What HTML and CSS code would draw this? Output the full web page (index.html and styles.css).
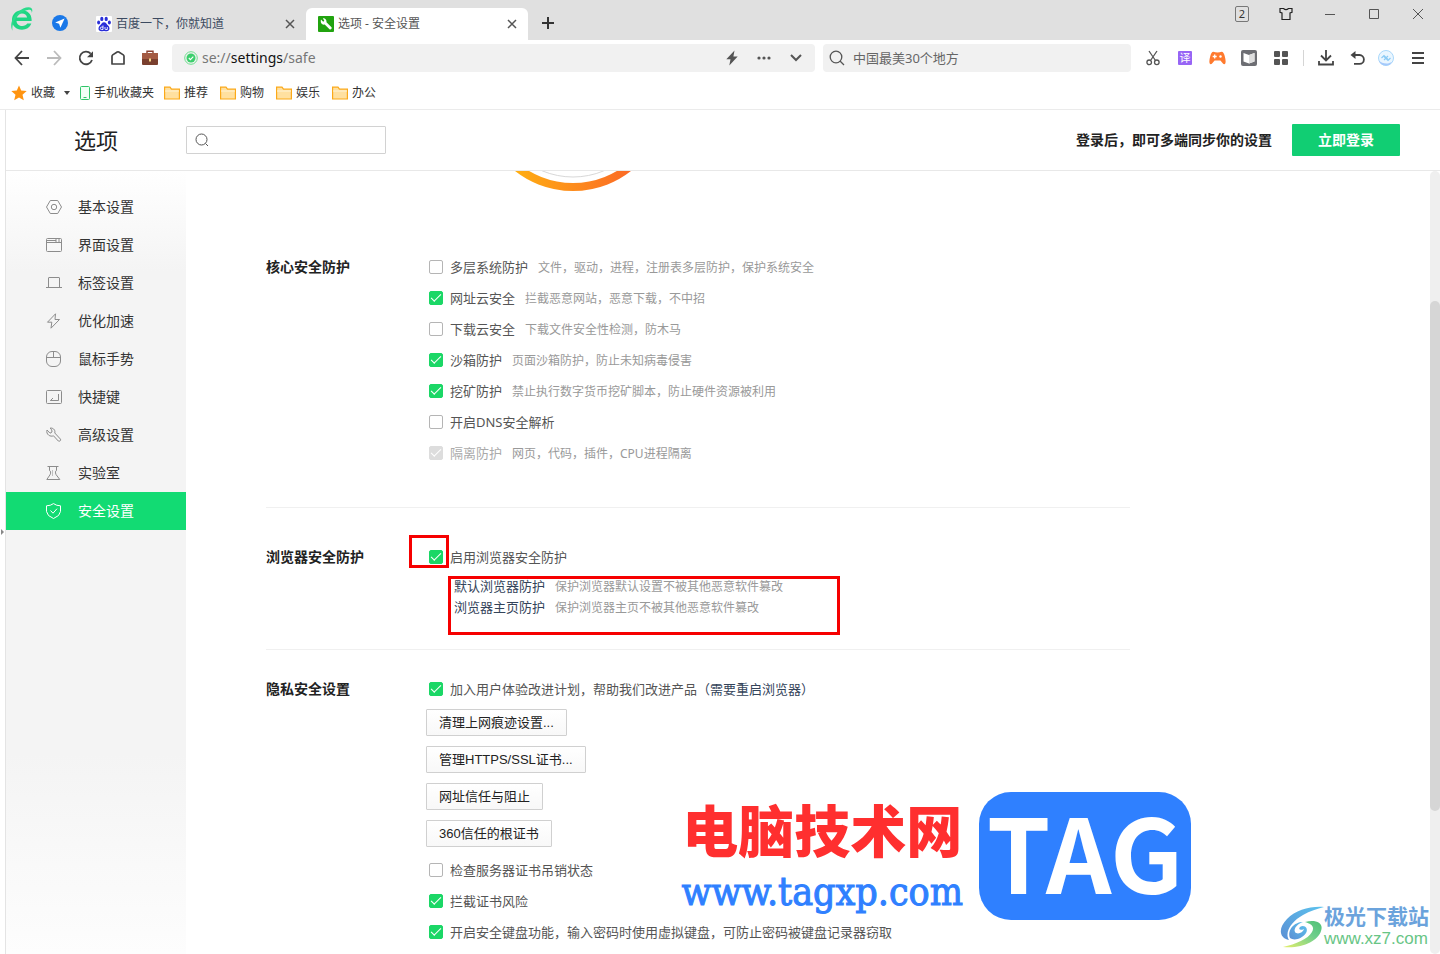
FILE: index.html
```html
<!DOCTYPE html>
<html lang="zh-CN">
<head>
<meta charset="utf-8">
<title>选项 - 安全设置</title>
<link rel="stylesheet" href="styles.css">
</head>
<body>
<div class="browser">
  <header class="titlebar">
    <div class="brand">
      <svg class="brand-logo" width="24" height="26" viewBox="0 0 24 26"><path d="M20.500 15H6.500c.3 3.200 2.700 5 5.800 5 2.300 0 4-.9 5-2.500h4c-1.600 4.200-5 6.200-9.300 6.200-5.800 0-10-4-10-9.800C2 8.200 6.200 4.200 12 4.200c5.600 0 9.600 4 9.600 9.300V15zM6.700 11.600h10.400c-.5-2.600-2.400-4-5.100-4-2.800 0-4.800 1.500-5.300 4z" fill="#1fd583"/><path d="M2.500 24.800C-.5 19.500 2 11.500 7.500 6.500 12.500 2 19 0 21.500 2.300c1.200 1.200.9 3.200.2 4.800.1-1.700-.2-2.700-1.300-3.100C17.500 3 12.500 5.300 8.700 9 4.300 13.400 1.600 19.500 2.500 24.800z" fill="#2bdb8b"/></svg>
      <svg width="16" height="16" viewBox="0 0 16 16"><circle cx="8" cy="8" r="8" fill="#1a78e8"/><path d="M12.600 3.500 3.200 7.600l3.900 1.200 1.300 3.900z" fill="#fff"/></svg>
    </div>
    <nav class="tabs">
      <div class="tab">
        <svg class="favicon" width="16" height="16" viewBox="0 0 16 16"><rect width="16" height="16" rx="1" fill="#fff"/><g fill="#2a2fd8"><ellipse cx="5.800" cy="2.900" rx="1.600" ry="2.200"/><ellipse cx="10.200" cy="2.900" rx="1.600" ry="2.200"/><ellipse cx="2.600" cy="6.500" rx="1.500" ry="2"/><ellipse cx="13.400" cy="6.500" rx="1.500" ry="2"/><path d="M8 6.200c2 0 2.800 2.200 4.300 3.600 2 1.900 1.500 5.400-1.400 5.400-1 0-1.800-.3-2.900-.3s-1.900.3-2.900.3c-2.900 0-3.400-3.500-1.400-5.400C5.200 8.400 6 6.200 8 6.200z"/></g><path d="M7 9.500v4H5.500a1.200 1.200 0 1 1 0-2.400H7M9 11v1.800q0 .7.700.7h1.600V11" fill="none" stroke="#fff" stroke-width=".9"/></svg>
        <a class="tab-title tab-title-idle" href="#">百度一下，你就知道</a>
        <button class="tab-close" aria-label="关闭标签"><svg width="10" height="10" viewBox="0 0 10 10"><path d="M1 1l8 8M9 1 1 9"/></svg></button>
      </div>
      <div class="tab tab-active">
        <svg class="favicon" width="16" height="16" viewBox="0 0 16 16"><rect width="16" height="16" rx="1" fill="#21a30f"/><path d="M3 3.600 5.200 5.700 6.300 4.800 4.800 2.300C7 1.900 8.900 3.700 8.500 6.200l5 5c.9 1-.9 3-2 2L6.700 8.500C4.200 9.200 2 7 3 3.600z" fill="#fff"/></svg>
        <a class="tab-title" href="#">选项 - 安全设置</a>
        <button class="tab-close" aria-label="关闭标签"><svg width="10" height="10" viewBox="0 0 10 10"><path d="M1 1l8 8M9 1 1 9"/></svg></button>
      </div>
      <button class="new-tab" aria-label="新建标签"><svg width="12" height="12" viewBox="0 0 12 12"><path d="M6 0v12M0 6h12" stroke="#333" stroke-width="2"/></svg></button>
    </nav>
    <div class="window-controls">
      <button><span class="count">2</span></button>
      <button aria-label="皮肤"><svg width="14" height="14" viewBox="0 0 14 14"><path d="M1 1.500h3.500Q7 3.600 9.500 1.500H13v3.800l-2 .7v6.500H3V6L1 5.300z" fill="none" stroke="#222" stroke-width="1.200"/></svg></button>
      <button aria-label="最小化"><svg width="10" height="10" viewBox="0 0 10 10"><path d="M0 5.500h10" stroke="#555"/></svg></button>
      <button aria-label="最大化"><svg width="10" height="10" viewBox="0 0 10 10"><path d="M.5.500h9v9h-9z" fill="none" stroke="#555"/></svg></button>
      <button aria-label="关闭"><svg width="10" height="10" viewBox="0 0 10 10"><path d="M0 0l10 10M10 0 0 10" stroke="#555"/></svg></button>
    </div>
  </header>

  <div class="toolbar">
    <div class="nav-buttons">
      <button aria-label="后退"><svg width="16" height="16" viewBox="0 0 16 16"><path d="M8 1 1.500 8 8 15M1.500 8H15" fill="none" stroke="#444" stroke-width="1.800"/></svg></button>
      <button aria-label="前进"><svg width="16" height="16" viewBox="0 0 16 16"><path d="M8 1l6.500 7L8 15M14.500 8H1" fill="none" stroke="#bbb" stroke-width="1.800"/></svg></button>
      <button aria-label="刷新"><svg width="16" height="16" viewBox="0 0 16 16"><path d="M14 10A6.300 6.300 0 1 1 12.700 3.700" fill="none" stroke="#444" stroke-width="1.800"/><path d="M15 1.200v6H9z" fill="#444"/></svg></button>
      <button aria-label="主页"><svg width="16" height="16" viewBox="0 0 16 16"><path d="M2 14V6.200Q2 5.400 2.700 4.900L7.200 2Q8 1.500 8.800 2l4.500 2.900q.7.500.7 1.300V14z" fill="none" stroke="#444" stroke-width="1.700" stroke-linejoin="round"/></svg></button>
      <button aria-label="工具箱"><svg width="16" height="16" viewBox="0 0 16 16"><path d="M5 3.500V1.200h6v2.300" fill="none" stroke="#8a4030" stroke-width="1.400"/><rect y="3" width="16" height="12" rx="1" fill="#7a3f2e"/><path d="M0 4q0-1 1-1h14q1 0 1 1v5H0z" fill="#a35a42"/><rect x="7" y="8.500" width="2" height="3" fill="#f8d98a"/></svg></button>
    </div>
    <div class="address">
      <svg class="safe-mark" width="14" height="14" viewBox="0 0 14 14"><circle cx="7" cy="7" r="6.300" fill="none" stroke="#6fdf8f" stroke-width="1"/><circle cx="7" cy="7" r="4.500" fill="#3ccf6d"/><path d="m4.800 7 1.600 1.600 2.900-2.900" fill="none" stroke="#fff" stroke-width="1.100"/></svg>
      <a class="url" href="#">se://<span class="url-host">settings</span>/safe</a>
      <button aria-label="极速模式"><svg width="12" height="16" viewBox="0 0 12 16"><path d="M8.500.500.300 9.200h4.200L3.300 15.500 11.700 6.500H7.400z" fill="#555"/></svg></button>
      <button aria-label="更多"><svg width="14" height="4" viewBox="0 0 14 4"><circle cx="2" cy="2" r="1.600" fill="#555"/><circle cx="7" cy="2" r="1.600" fill="#555"/><circle cx="12" cy="2" r="1.600" fill="#555"/></svg></button>
      <button aria-label="展开"><svg width="12" height="8" viewBox="0 0 12 8"><path d="m1 1 5 5 5-5" fill="none" stroke="#555" stroke-width="2"/></svg></button>
    </div>
    <label class="web-search">
      <svg width="16" height="16" viewBox="0 0 16 16"><circle cx="7" cy="7" r="5.800" fill="none" stroke="#555" stroke-width="1.300"/><path d="m11 11 4 4" stroke="#555" stroke-width="1.300"/></svg>
      <input class="web-search-input" type="text" aria-label="搜索" placeholder="中国最美30个地方">
    </label>
    <div class="tools">
      <button aria-label="截图"><svg width="14" height="16" viewBox="0 0 14 16"><path d="M3 1l6.800 10M11 1 4.200 11" stroke="#555" stroke-width="1.300"/><circle cx="3.200" cy="12.300" r="2.300" fill="none" stroke="#555" stroke-width="1.300"/><circle cx="10.800" cy="12.300" r="2.300" fill="none" stroke="#555" stroke-width="1.300"/></svg></button>
      <button><span class="translate">译</span></button>
      <button aria-label="游戏"><svg width="17" height="14" viewBox="0 0 17 14"><path d="M4.300.800Q8.500 2 12.700.800q2 .2 3 4.200 1.500 5.500.6 7.500-1 1.500-2.600-.3L11.400 9.500H5.600L3.300 12.200Q1.700 14 .7 12.500-.2 10.500 1.300 5q1-4 3-4.200z" fill="#ff7a2e"/><path d="M5.700 3.500v4M3.700 5.500h4" stroke="#fff" stroke-width="1.300"/><circle cx="11.500" cy="5.500" r="1.200" fill="#fff"/></svg></button>
      <button aria-label="阅读"><svg width="16" height="16" viewBox="0 0 16 16"><rect width="16" height="16" rx="2" fill="#6d6e73"/><path d="M2.500 3 8 5l5.500-2v8.500L8 13.500l-5.500-2z" fill="#fff"/><path d="M8 5l5.500-2v8.500L8 13.500z" fill="#dedede"/></svg></button>
      <button aria-label="扩展"><svg width="14" height="14" viewBox="0 0 14 14" fill="#555"><rect width="6" height="6" rx="1"/><rect x="8" width="6" height="6" rx="1"/><rect y="8" width="6" height="6" rx="1"/><rect x="8" y="8" width="6" height="6" rx="1"/></svg></button>
      <span class="tools-divider"></span>
      <button aria-label="下载"><svg width="16" height="16" viewBox="0 0 16 16"><path d="M8 0v10M3 5.500l5 5 5-5M1 11v3.500h14V11" fill="none" stroke="#444" stroke-width="1.800"/></svg></button>
      <button aria-label="撤销"><svg width="16" height="14" viewBox="0 0 16 14"><path d="M3 4h6.500a4.400 4.400 0 0 1 0 8.800H4" fill="none" stroke="#444" stroke-width="1.800"/><path d="M.500 4 5.500 0v8z" fill="#444"/></svg></button>
      <button class="avatar" aria-label="账号"><svg width="16" height="16" viewBox="0 0 16 16"><circle cx="8" cy="8" r="7.500" fill="#eaf6ff" stroke="#a9d8fb"/><path d="M.8 10.500Q4 14 10 13.500L14 12Q12 15.500 8 15.500 2.500 15.500.8 10.500z" fill="#a5c9fb"/><path d="M3.500 8 6 5.500l4 4M12.500 8 10 10.500l-4-4M6 10l4-4" fill="none" stroke="#8ccbf5" stroke-width="1.200"/></svg></button>
      <button aria-label="菜单"><svg width="12" height="12" viewBox="0 0 12 12"><path d="M0 1h12M0 6h12M0 11h12" stroke="#444" stroke-width="2"/></svg></button>
    </div>
  </div>

  <nav class="bookmarks">
    <button class="bookmark"><svg width="16" height="16" viewBox="0 0 16 16"><path d="m8 .500 2.200 5.100 5.500.5-4.200 3.700 1.300 5.500L8 12.400l-4.800 2.900 1.300-5.500L.300 6.100l5.500-.5z" fill="#ff9410"/></svg>收藏<span class="caret"></span></button>
    <a class="bookmark" href="#"><svg width="10" height="14" viewBox="0 0 10 14"><rect x=".5" y=".5" width="9" height="13" rx="1" fill="#f0fff5" stroke="#2fc568"/><path d="M3.500 11.500h3" stroke="#2fc568"/></svg>手机收藏夹</a>
    <a class="bookmark folder" href="#"><svg width="16" height="14" viewBox="0 0 16 14"><path d="M.6 13V1.200H6l1.500 2h7.900V13z" fill="#ffe0a0" stroke="#fba919" stroke-width="1.200"/><path d="M1 5h14" stroke="#fff3d6"/></svg>推荐</a>
    <a class="bookmark folder" href="#"><svg width="16" height="14" viewBox="0 0 16 14"><path d="M.6 13V1.200H6l1.500 2h7.900V13z" fill="#ffe0a0" stroke="#fba919" stroke-width="1.200"/><path d="M1 5h14" stroke="#fff3d6"/></svg>购物</a>
    <a class="bookmark folder" href="#"><svg width="16" height="14" viewBox="0 0 16 14"><path d="M.6 13V1.200H6l1.500 2h7.900V13z" fill="#ffe0a0" stroke="#fba919" stroke-width="1.200"/><path d="M1 5h14" stroke="#fff3d6"/></svg>娱乐</a>
    <a class="bookmark folder" href="#"><svg width="16" height="14" viewBox="0 0 16 14"><path d="M.6 13V1.200H6l1.500 2h7.900V13z" fill="#ffe0a0" stroke="#fba919" stroke-width="1.200"/><path d="M1 5h14" stroke="#fff3d6"/></svg>办公</a>
  </nav>

  <div class="viewport">
    <button class="panel-handle" aria-label="展开侧栏"></button>
    <div class="page">
      <header class="page-header">
        <h1 class="page-title">选项</h1>
        <label class="option-search">
          <svg width="14" height="14" viewBox="0 0 14 14"><circle cx="6.500" cy="6.500" r="5.500" fill="none" stroke="#555"/><path d="m10.500 10.500 2.500 2.500" stroke="#555"/></svg>
          <input class="option-search-input" type="text" aria-label="搜索选项">
        </label>
        <p class="login-tip">登录后，即可多端同步你的设置</p>
        <button class="login">立即登录</button>
      </header>

      <div class="page-body">
        <nav class="sidebar">
          <a class="side-item" href="#"><svg viewBox="0 0 16 16"><path d="M4.300 1.500h7.400L15.500 8l-3.800 6.500H4.300L.500 8z"/><circle cx="8" cy="8" r="2.700"/></svg>基本设置</a>
          <a class="side-item" href="#"><svg viewBox="0 0 16 16"><rect x=".5" y="1.500" width="15" height="13" rx="1"/><path d="M1 5.500h14M10 2v3M13 2v3M1 3.500h9"/></svg>界面设置</a>
          <a class="side-item" href="#"><svg viewBox="0 0 16 16"><path d="M0 12.500h16M2.500 12V3q0-.5.500-.5h10q.5 0 .5.500v9"/></svg>标签设置</a>
          <a class="side-item" href="#"><svg viewBox="0 0 16 16"><path d="M9.500.800 1.500 9.200h4.300L5 15.200 13.500 6.500H9z"/></svg>优化加速</a>
          <a class="side-item" href="#"><svg viewBox="0 0 16 16"><rect x=".5" y=".5" width="14" height="15" rx="5.500"/><path d="M1 6.500h13M7.500 1v5.500"/></svg>鼠标手势</a>
          <a class="side-item" href="#"><svg viewBox="0 0 16 16"><rect x=".5" y="1.500" width="15" height="13" rx="1"/><path d="M12.500 5v6.500h-8L7 9M4.500 11.500h3"/></svg>快捷键</a>
          <a class="side-item" href="#"><svg viewBox="0 0 16 16"><path d="M1 3 4 6.200 6 5 5.700 2.700 4 1.200C6.500.500 9.600 2.500 8.800 6l5.700 6.200c.6 1.500-1 2.500-2.200 1.800L7.500 8.800C4.500 10.200-.3 7.500 1 3z"/></svg>高级设置</a>
          <a class="side-item" href="#"><svg viewBox="0 0 16 16"><path d="M1.500 1.500h11M3.500 2v3.500q0 .5 1 .8.500 2-.5 3.500L.800 14.500h13L10 9.500q-.7-1.500-.5-3.200 1-.3 1-.8V2"/><path d="M6.500 5.500v5" stroke-dasharray="1 1"/></svg>实验室</a>
          <a class="side-item side-item-active" href="#"><svg viewBox="0 0 16 16"><path d="M7.500.600Q10.500 2.800 14.500 2.800V8.500Q14 13 7.500 15.500 1 13 .500 8.500V2.800Q4.500 2.800 7.500.600z"/><path d="m4.500 7.500 2.500 2.700 4-4.500"/></svg>安全设置</a>
        </nav>

        <main class="content">
          <svg class="gauge" width="188" height="20" viewBox="0 0 188 20"><defs><linearGradient id="ring" gradientUnits="userSpaceOnUse" x1="36" y1="0" x2="152" y2="0"><stop offset="0" stop-color="#ffae12"/><stop offset="1" stop-color="#fb6a26"/></linearGradient></defs><circle cx="94" cy="-74" r="90" fill="none" stroke="url(#ring)" stroke-width="8"/><circle cx="94" cy="-74" r="80" fill="none" stroke="#d8d8d8"/></svg>

          <section class="group group-core">
            <h2 class="group-title">核心安全防护</h2>
            <div class="options">
              <div class="option"><label><input type="checkbox"><span class="name">多层系统防护</span></label><span class="note">文件，驱动，进程，注册表多层防护，保护系统安全</span></div>
              <div class="option"><label><input type="checkbox" checked><span class="name">网址云安全</span></label><span class="note">拦截恶意网站，恶意下载，不中招</span></div>
              <div class="option"><label><input type="checkbox"><span class="name">下载云安全</span></label><span class="note">下载文件安全性检测，防木马</span></div>
              <div class="option"><label><input type="checkbox" checked><span class="name">沙箱防护</span></label><span class="note">页面沙箱防护，防止未知病毒侵害</span></div>
              <div class="option"><label><input type="checkbox" checked><span class="name">挖矿防护</span></label><span class="note">禁止执行数字货币挖矿脚本，防止硬件资源被利用</span></div>
              <div class="option"><label><input type="checkbox"><span class="name">开启DNS安全解析</span></label></div>
              <div class="option"><label><input type="checkbox" checked disabled><span class="name">隔离防护</span></label><span class="note">网页，代码，插件，CPU进程隔离</span></div>
            </div>
          </section>

          <section class="group group-browser">
            <h2 class="group-title">浏览器安全防护</h2>
            <div class="options">
              <div class="option marked"><label><input type="checkbox" checked><span class="name">启用浏览器安全防护</span></label></div>
              <div class="protections">
                <p class="protection">默认浏览器防护<span class="note">保护浏览器默认设置不被其他恶意软件篡改</span></p>
                <p class="protection">浏览器主页防护<span class="note">保护浏览器主页不被其他恶意软件篡改</span></p>
              </div>
            </div>
          </section>

          <section class="group group-privacy">
            <h2 class="group-title">隐私安全设置</h2>
            <div class="options">
              <div class="option"><label><input type="checkbox" checked><span class="name">加入用户体验改进计划，帮助我们改进产品<span class="restart">（需要重启浏览器）</span></span></label></div>
              <div class="actions">
                <button class="action">清理上网痕迹设置...</button>
                <button class="action">管理HTTPS/SSL证书...</button>
                <button class="action">网址信任与阻止</button>
                <button class="action">360信任的根证书</button>
              </div>
              <div class="option"><label><input type="checkbox"><span class="name">检查服务器证书吊销状态</span></label></div>
              <div class="option"><label><input type="checkbox" checked><span class="name">拦截证书风险</span></label></div>
              <div class="option"><label><input type="checkbox" checked><span class="name">开启安全键盘功能，输入密码时使用虚拟键盘，可防止密码被键盘记录器窃取</span></label></div>
            </div>
          </section>
        </main>
        <div class="scrollbar"><div class="scrollbar-thumb"></div></div>
      </div>
    </div>
  </div>

  <div class="tag-mark">
    <div class="tag-text">
      <span class="tag-name">电脑技术网</span>
      <span class="tag-url">www.tagxp.com</span>
    </div>
    <span class="tag-badge">TAG</span>
  </div>

  <div class="site-mark">
    <svg width="44" height="42" viewBox="0 0 44 42"><defs><linearGradient id="swb" x1="0" y1="1" x2="1" y2="0"><stop offset="0" stop-color="#5b8fd4"/><stop offset="1" stop-color="#5cc3ee"/></linearGradient><linearGradient id="swg" x1="0" y1="1" x2="1" y2="0"><stop offset="0" stop-color="#e6ef6a"/><stop offset=".6" stop-color="#6fcf8c"/><stop offset="1" stop-color="#4fc076"/></linearGradient></defs><path d="M44 1C30 0 16 4 7 13-2 22-1 32 9 34 4 26 12 15 23 9 30 5 37 3 44 1z" fill="url(#swb)"/><path d="M10 32C7 24 14 16 23 16 19 17 13 22 15 26 17 29 23 27 24 23 20 25 18 23 20 21 24 18 29 22 26 27 22 33 14 35 10 32z" fill="url(#swb)"/><path d="M25 16C36 13 44 17 41 25 38 35 22 43 3 41 16 38 28 33 32 26 35 20 31 18 25 16z" fill="url(#swg)"/></svg>
    <div class="site-text">
      <span class="site-name">极光下载站</span>
      <span class="site-url">www.xz7.com</span>
    </div>
  </div>
</div>
</body>
</html>
```
FILE: styles.css
```css
*,
*::before {
  box-sizing: border-box;
}

body {
  margin: 0;
  font: 13px/20px "Noto Sans", "Noto Sans CJK SC", sans-serif;
  color: #333;
  background: #fff;
}

h1,
h2,
p {
  margin: 0;
}

a {
  color: inherit;
  text-decoration: none;
}

button {
  display: flex;
  align-items: center;
  justify-content: center;
  padding: 0;
  border: 0;
  background: none;
  font: inherit;
  color: inherit;
}

svg {
  flex: none;
}

.browser {
  position: relative;
  display: flex;
  flex-direction: column;
  height: 100vh;
  overflow: hidden;
}

/* Title bar */
.titlebar {
  display: flex;
  height: 40px;
  background: #e0e0e0;
}

.brand {
  display: flex;
  align-items: center;
  gap: 18px;
  padding: 6px 28px 0 10px;
}

.brand-logo {
  align-self: flex-start;
}

.tabs {
  display: flex;
  flex: 1;
  align-items: flex-end;
}

.tab {
  display: flex;
  align-items: center;
  gap: 4px;
  width: 210px;
  height: 32px;
  font-size: 12px;
}

.tab-active {
  width: 222px;
  padding-left: 12px;
  border-radius: 6px 6px 0 0;
  background: #fff;
}

.tab-title {
  flex: 1;
  color: #555;
}

.tab-title-idle {
  color: #3c4a60;
}

.tab-close {
  width: 24px;
  height: 24px;
  margin-right: 4px;
}

.tab-close svg {
  stroke: #555;
  stroke-width: 1.500;
}

.new-tab {
  width: 40px;
  height: 34px;
}

.window-controls {
  display: flex;
}

.window-controls button {
  width: 44px;
  height: 28px;
}

.count {
  width: 14px;
  height: 16px;
  border: 1px solid #777;
  border-radius: 2px;
  font-size: 11px;
  line-height: 14px;
}

/* Toolbar */
.toolbar {
  display: flex;
  align-items: center;
  height: 36px;
  padding: 0 10px 0 6px;
}

.nav-buttons {
  display: flex;
  margin-right: 6px;
}

.nav-buttons button {
  width: 32px;
  height: 28px;
}

.address {
  display: flex;
  flex: 2 2 643px;
  align-items: center;
  height: 28px;
  margin-right: 8px;
  padding: 0 3px 0 12px;
  border-radius: 4px;
  background: #f1f1f1;
}

.address button {
  width: 32px;
  height: 28px;
}

.url {
  flex: 1;
  margin-left: 4px;
  font-size: 14px;
  color: #777;
}

.url-host {
  color: #111;
}

.web-search {
  display: flex;
  flex: 1 1 308px;
  align-items: center;
  gap: 8px;
  height: 28px;
  margin-right: 10px;
  padding: 0 6px;
  border-radius: 4px;
  background: #f1f1f1;
}

.web-search-input,
.option-search-input {
  flex: 1;
  min-width: 0;
  padding: 0;
  border: 0;
  outline: 0;
  background: none;
  font: inherit;
}

.web-search-input::placeholder {
  color: #666;
}

.tools {
  display: flex;
  align-items: center;
  gap: 8px;
}

.tools button {
  width: 24px;
  height: 24px;
}

.tools .avatar {
  margin-left: -4px;
}

.tools-divider {
  width: 1px;
  height: 16px;
  margin: 0 2px;
  background: #d5d5d5;
}

.translate {
  width: 14px;
  height: 14px;
  border-radius: 1px;
  background: #9765f5;
  color: #fff;
  font-size: 11px;
  line-height: 14px;
}

/* Bookmarks */
.bookmarks {
  display: flex;
  align-items: center;
  gap: 10px;
  height: 34px;
  padding-left: 11px;
  border-bottom: 1px solid #ebebeb;
  font-size: 12px;
}

.bookmark {
  display: flex;
  align-items: center;
  gap: 4px;
}

.folder {
  padding-right: 2px;
}

.caret {
  margin-left: 5px;
  border: 3px solid transparent;
  border-top: 4px solid #444;
  border-bottom: 0;
}

/* Settings page */
.viewport {
  display: flex;
  flex: 1;
  min-height: 0;
}

.panel-handle {
  width: 5px;
}

.panel-handle::before {
  content: "";
  border: 3px solid transparent;
  border-left: 3px solid #888;
  border-right: 0;
}

.page {
  display: flex;
  flex: 1;
  flex-direction: column;
  min-width: 0;
  border-left: 1px solid #e4e4e4;
}

.page-header {
  display: flex;
  align-items: center;
  height: 61px;
  padding-right: 40px;
  border-bottom: 1px solid #e8e8e8;
}

.page-title {
  width: 180px;
  padding-left: 68px;
  font-size: 22px;
  font-weight: 400;
  line-height: 32px;
  color: #222;
}

.option-search {
  display: flex;
  align-items: center;
  gap: 6px;
  width: 200px;
  height: 28px;
  padding: 0 8px;
  border: 1px solid #d2d2d2;
  border-radius: 1px;
}

.login-tip {
  margin-left: auto;
  font-size: 14px;
  font-weight: 700;
  color: #222;
}

.login {
  width: 108px;
  height: 32px;
  margin-left: 20px;
  border-radius: 1px;
  background: #11ce73;
  color: #fff;
  font-size: 14px;
  font-weight: 700;
}

.page-body {
  display: flex;
  flex: 1;
  min-height: 0;
}

.sidebar {
  width: 180px;
  padding-top: 17px;
  background: linear-gradient(#fff, #f4f4f4 100px, #f4f4f4 calc(100% - 200px), #fdfdfd);
}

.side-item {
  display: flex;
  align-items: center;
  gap: 16px;
  height: 38px;
  padding-left: 40px;
  font-size: 14px;
  color: #333;
}

.side-item svg {
  width: 16px;
  height: 16px;
  fill: none;
  stroke: #8c8c8c;
}

.side-item-active {
  background: #12db73;
  color: #fff;
}

.side-item-active svg {
  stroke: #fff;
}

.content {
  flex: 1;
  min-width: 0;
  padding-left: 80px;
  overflow: hidden;
}

.gauge {
  display: block;
  margin: 0 0 61px 213px;
}

.group {
  display: grid;
  grid-template-columns: 160px 1fr;
  max-width: 864px;
}

.group-core {
  padding-bottom: 38px;
  border-bottom: 1px solid #f0f0f0;
}

.group-browser {
  padding: 34px 0 31px;
  border-bottom: 1px solid #f0f0f0;
}

.group-privacy {
  padding-top: 24px;
}

.group-title {
  font-size: 14px;
  line-height: 30px;
  color: #222;
}

.option {
  display: flex;
  gap: 10px;
  height: 31px;
  padding-left: 3px;
  line-height: 31px;
}

.option label {
  display: flex;
  align-items: center;
  gap: 7px;
  height: 30px;
  line-height: 30px;
  color: #555;
}

.option input {
  display: grid;
  place-items: center;
  width: 14px;
  height: 14px;
  margin: 0;
  appearance: none;
  border: 1px solid #b5b5b5;
  border-radius: 2px;
  background: #fff;
}

.option input:checked {
  border-color: #1bd766;
  background: #1bd766;
}

.option input:checked::before {
  content: "";
  width: 10px;
  height: 5px;
  margin-top: -4px;
  border: solid #fff;
  border-width: 0 0 1px 1px;
  rotate: -45deg;
}

.option input:disabled {
  border-color: #ddd;
  background: #ddd;
}

.option input:disabled + .name {
  color: #aaa;
}

.note {
  font-size: 12px;
  color: #999;
}

.restart {
  color: #34445a;
}

.marked {
  position: relative;
}

.marked::before {
  content: "";
  position: absolute;
  top: -7px;
  left: -17px;
  width: 40px;
  height: 33px;
  border: 3px solid #f60000;
}

.protections {
  position: relative;
  margin: 3px 0 0 28px;
}

.protections::before {
  content: "";
  position: absolute;
  top: 0;
  left: -6px;
  width: 392px;
  height: 59px;
  border: 3px solid #f60000;
}

.protection {
  display: flex;
  gap: 10px;
  line-height: 21px;
  color: #34445a;
}

.actions {
  display: flex;
  flex-direction: column;
  align-items: flex-start;
  gap: 10px;
  margin: 4px 0 8px;
}

.action {
  height: 27px;
  padding: 0 12px;
  border: 1px solid #d0d0d0;
  border-radius: 1px;
  background: linear-gradient(#fff, #f8f8f8);
  font-family: "Liberation Sans", "Noto Sans CJK SC", sans-serif;
  color: #222;
}

.scrollbar {
  width: 10px;
  padding-top: 130px;
  border-radius: 5px;
  background: #efefef;
}

.scrollbar-thumb {
  height: 510px;
  border-radius: 5px;
  background: #d6d6d6;
}

/* Overlaid marks */
.tag-mark {
  position: absolute;
  right: 249px;
  bottom: 30px;
  display: flex;
  align-items: center;
  gap: 16px;
}

.tag-text {
  display: flex;
  flex-direction: column;
  align-items: center;
  padding-top: 8px;
}

.tag-name {
  font: 900 56px/64px "Noto Sans CJK SC", sans-serif;
  color: #ff2f2f;
}

.tag-url {
  font: 39px/64px "DejaVu Serif Condensed", "DejaVu Serif", serif;
  color: #2f80ff;
  -webkit-text-stroke: 1px #2f80ff;
}

.tag-badge {
  width: 212px;
  height: 128px;
  border-radius: 32px;
  background: #2f80ff;
  color: #fff;
  font: 700 102px/116px "Noto Sans CJK SC", sans-serif;
  text-align: center;
}

.site-mark {
  position: absolute;
  right: 11px;
  bottom: 3px;
  display: flex;
  align-items: center;
}

.site-text {
  display: flex;
  flex-direction: column;
  white-space: nowrap;
}

.site-name {
  font: 700 21px/24px "Noto Sans CJK SC", sans-serif;
  color: #6ba3dc;
}

.site-url {
  font: 17px/24px "Liberation Sans", sans-serif;
  color: #68c585;
}
```
